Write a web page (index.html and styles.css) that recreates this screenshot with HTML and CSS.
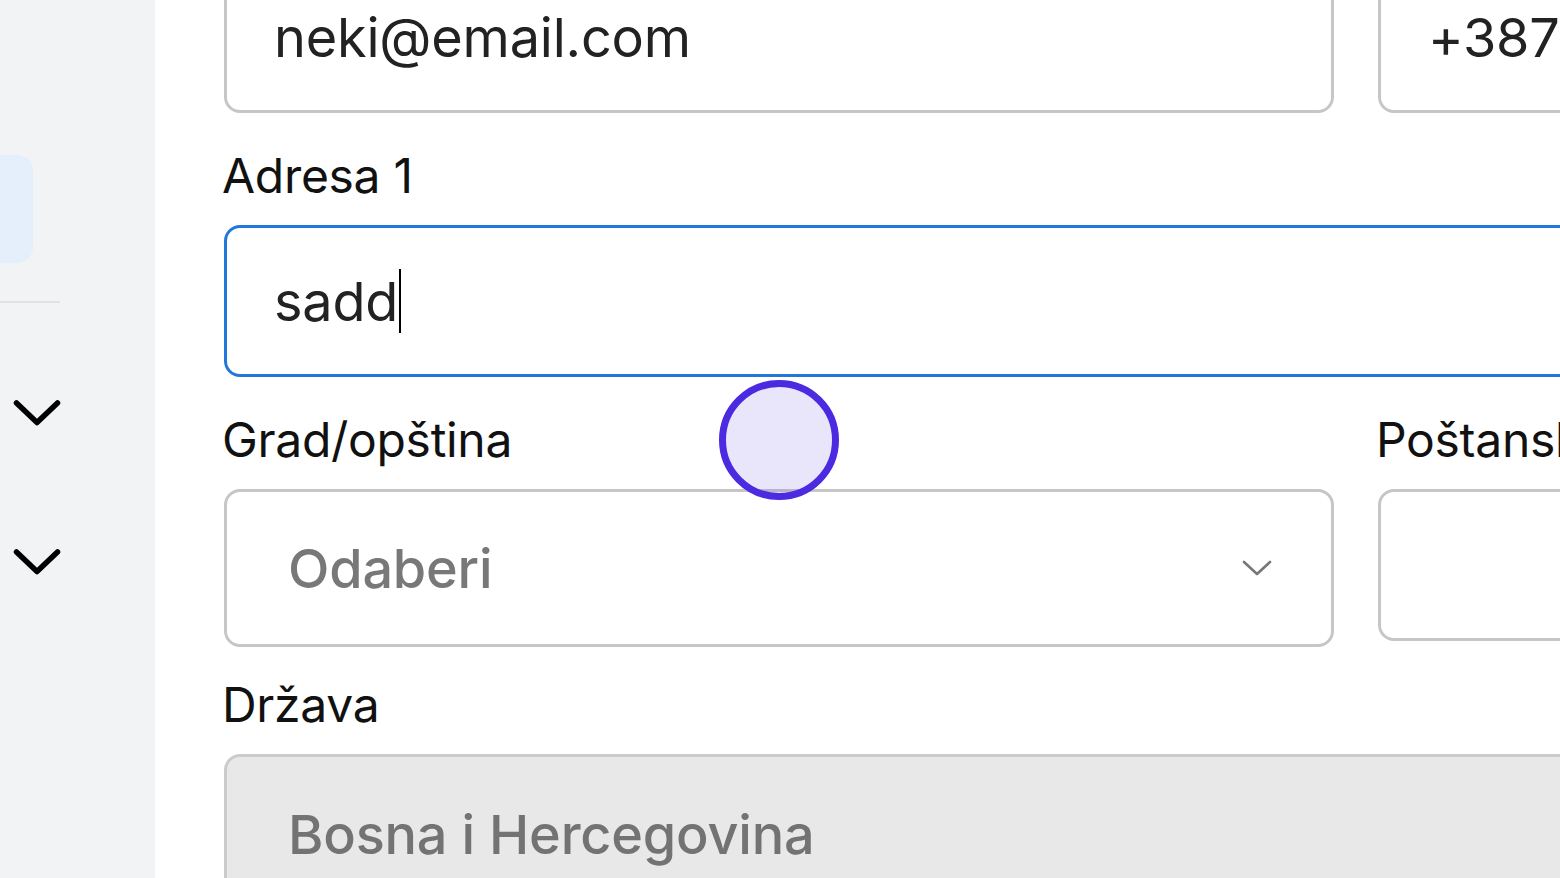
FILE: index.html
```html
<!DOCTYPE html>
<html lang="bs">
<head>
<meta charset="utf-8">
<title>Forma</title>
<link rel="stylesheet" href="styles.css">
</head>
<body>
<div class="app">
  <aside class="sidebar">
    <div class="nav-active"></div>
    <div class="divider"></div>
    <div class="nav-toggle first">
      <svg class="chev" viewBox="0 0 48 28" width="48" height="28"><polyline points="3.5,4 24,23.5 44.5,4" fill="none" stroke="#000" stroke-width="5.5" stroke-linecap="round" stroke-linejoin="round"/></svg>
    </div>
    <div class="nav-toggle second">
      <svg class="chev" viewBox="0 0 48 28" width="48" height="28"><polyline points="3.5,4 24,23.5 44.5,4" fill="none" stroke="#000" stroke-width="5.5" stroke-linecap="round" stroke-linejoin="round"/></svg>
    </div>
  </aside>
  <main class="main">
    <div class="form">
      <div class="field">
        <div class="input"><span class="value">neki@email.com</span></div>
      </div>
      <div class="field">
        <div class="input"><span class="value">+387</span></div>
      </div>
      <div class="field span2">
        <label class="label">Adresa 1</label>
        <div class="input focused"><span class="value">sadd</span><span class="caret"></span></div>
      </div>
      <div class="field">
        <label class="label">Grad/opština</label>
        <div class="select">
          <span class="placeholder">Odaberi</span>
          <svg class="select-chev" viewBox="0 0 30 16" width="30" height="16"><polyline points="2,2 15,14 28,2" fill="none" stroke="#777" stroke-width="2.6" stroke-linecap="round" stroke-linejoin="round"/></svg>
        </div>
      </div>
      <div class="field">
        <label class="label">Poštanski broj</label>
        <div class="input"></div>
      </div>
      <div class="field span2">
        <label class="label">Država</label>
        <div class="input disabled"><span class="value muted">Bosna i Hercegovina</span></div>
      </div>
    </div>
  </main>
</div>
<div class="click-indicator"></div>
</body>
</html>
```
FILE: styles.css
```css
html, body {
  margin: 0;
  padding: 0;
  width: 1560px;
  height: 878px;
  overflow: hidden;
  background: #ffffff;
  font-family: Inter, "Noto Sans", "Liberation Sans", sans-serif;
}

.app {
  display: flex;
  width: 1560px;
  height: 878px;
  overflow: hidden;
}

.sidebar {
  width: 155px;
  flex: 0 0 155px;
  background: #f2f3f5;
  display: flex;
  flex-direction: column;
}

.nav-active {
  width: 33px;
  height: 108px;
  margin-top: 155px;
  background: #e5eefb;
  border-radius: 0 16px 16px 0;
}

.divider {
  width: 60px;
  height: 2px;
  margin-top: 38px;
  background: #e1e2e5;
}

.nav-toggle {
  height: 28px;
  padding-left: 13px;
}

.nav-toggle.first {
  margin-top: 96px;
}

.nav-toggle.second {
  margin-top: 121px;
}

.chev {
  display: block;
}

.main {
  flex: 1 1 auto;
  overflow: hidden;
  padding-left: 69px;
}

.form {
  margin-top: -39px;
  display: grid;
  grid-template-columns: 1110px 1110px;
  column-gap: 44px;
  row-gap: 34px;
  align-items: start;
}

.span2 {
  grid-column: 1 / span 2;
}

.field {
  display: flex;
  flex-direction: column;
}

.label {
  display: block;
  font-size: 48px;
  line-height: 58px;
  letter-spacing: -0.3px;
  color: #111111;
  margin-bottom: 20px;
  margin-left: -2px;
  white-space: nowrap;
}

.input {
  box-sizing: border-box;
  height: 152px;
  border: 3px solid #c6c6c6;
  border-radius: 16px;
  background: #ffffff;
  padding-left: 47px;
  display: flex;
  align-items: center;
}

.input.focused {
  border-color: #2277df;
}

.input.disabled {
  background: #e8e8e8;
  border-color: #cbcbcb;
  height: 160px;
  padding-left: 61px;
}

.value {
  font-size: 54px;
  letter-spacing: -0.2px;
  color: #222222;
  white-space: nowrap;
}

.value.muted {
  color: #737373;
  font-weight: 500;
}

.caret {
  display: inline-block;
  width: 2px;
  height: 64px;
  background: #000000;
  margin-left: 1px;
}

.select {
  box-sizing: border-box;
  height: 158px;
  margin-bottom: -5px;
  border: 3px solid #c6c6c6;
  border-radius: 16px;
  background: #ffffff;
  padding-left: 61px;
  padding-right: 59px;
  display: flex;
  align-items: center;
  justify-content: space-between;
}

.placeholder {
  font-size: 54px;
  letter-spacing: -0.2px;
  font-weight: 500;
  color: #787878;
}

.select-chev {
  display: block;
}

.click-indicator {
  position: absolute;
  left: 719px;
  top: 380px;
  width: 106px;
  height: 106px;
  border: 7px solid #4b2ae0;
  border-radius: 50%;
  background: rgba(75, 42, 224, 0.12);
}
```
